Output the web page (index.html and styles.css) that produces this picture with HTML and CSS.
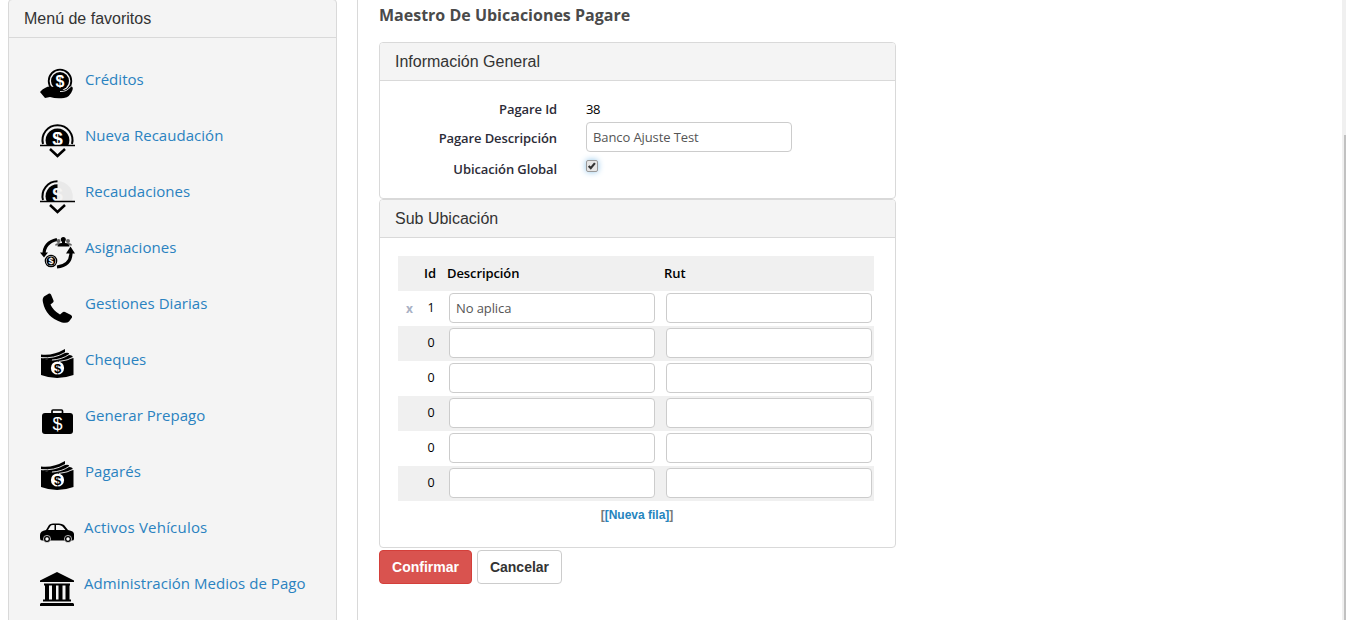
FILE: index.html
```html
<!DOCTYPE html>
<html lang="es">
<head>
<meta charset="utf-8">
<title>Maestro De Ubicaciones Pagare</title>
<link rel="stylesheet" href="styles.css">
</head>
<body>
<div class="page">
  <aside class="sidebar">
    <h2 class="sidebar-title">Menú de favoritos</h2>
    <nav class="menu">
      <a class="item"><svg class="icon" viewBox="0 0 36 36"><circle cx="20" cy="15" r="11.300" fill="none" stroke="#000" stroke-width="1.800"/><circle cx="20" cy="15" r="9"/><text x="20" y="20.500" font-size="16" text-anchor="middle" fill="#fff">$</text><path d="M0 26Q5 20.500 10 20.500Q14 20.500 18 22Q23 21.500 23 24Q30 23 31 20.500Q33.500 20.500 32.500 24Q30 31 24 32Q16 33 10 31L5 32Z"/><path d="M20 25.500Q27 26 30.500 20.500" fill="none" stroke="#f4f4f4" stroke-width=".9"/></svg><span>Créditos</span></a>
      <a class="item"><svg class="icon" viewBox="0 0 36 36"><path d="M3 22A15 15 0 1 1 32 22" fill="none" stroke="#000" stroke-width="2"/><path d="M6.800 23.500A11.900 11.900 0 1 1 28.200 23.500Z"/><text x="17.500" y="22.500" font-size="19" text-anchor="middle" fill="#fff">$</text><path d="M0 23.500H35" stroke="#000" stroke-width="1.500"/><path d="M10 27L17.500 34L25 27" fill="none" stroke="#000" stroke-width="2.500"/></svg><span>Nueva Recaudación</span></a>
      <a class="item"><svg class="icon" viewBox="0 0 36 36"><path d="M17.500 3A15.300 15.300 0 0 1 32 23H17.500Z" fill="#e9e9e9"/><path d="M3 22A15 15 0 0 1 17.500 3.200" fill="none" stroke="#000" stroke-width="2"/><path d="M6.800 23.500A11.900 11.900 0 0 1 17.500 6.300V23.500Z"/><text x="17.500" y="22.500" font-size="19" text-anchor="middle" fill="#f4f4f4">$</text><path d="M0 23.500H35" stroke="#000" stroke-width="1.500"/><path d="M10 27L17.500 34L25 27" fill="none" stroke="#000" stroke-width="2.500"/></svg><span>Recaudaciones</span></a>
      <a class="item"><svg class="icon" viewBox="0 -1.5 36 36"><path d="M4 19Q4 7 17 4M31 17Q31 30 17 31.500" fill="none" stroke="#000" stroke-width="3.200"/><path d="M0 17H8L4 22ZM26 18L30.500 11L35 18Z"/><circle cx="11" cy="25.500" r="5.700" fill="none" stroke="#000" stroke-width="1.200"/><circle cx="11" cy="25.500" r="4.500"/><text x="11" y="28.700" font-size="9" text-anchor="middle" fill="#fff">$</text><g fill="#666"><circle cx="18.500" cy="5.500" r="2"/><circle cx="28" cy="5.500" r="2"/><path d="M15 10Q15 7.500 19 7.500H28Q32 7.500 32 10Z"/></g><circle cx="23.300" cy="4" r="2.500"/><path d="M17.500 11Q18 8 22 7.500V5H25V7.500Q29 8 29.500 11Z"/></svg><span>Asignaciones</span></a>
      <a class="item"><svg class="icon" viewBox="0 -1.5 36 36"><path d="M4 5L9 2Q10 1.500 11 3L13.500 9Q14 10 13 11L10.500 13Q13 19 20 23L23 20.500Q24 20 25 20.500L31 23.500Q32.500 24.500 32 26L29 30Q27 32 22 31Q6 26 3 11Q2 7 4 5Z"/></svg><span>Gestiones Diarias</span></a>
      <a class="item"><svg class="icon" viewBox="0 0 36 36"><path d="M1 12Q17 17 33.500 12V29Q17 35 1 29Z"/><path d="M1 8.500Q13 10 25 3V7Q30 6 29 9Q33 9 33 12Q17 18 1 12Z"/><path d="M1 11.500Q14 13 25 6.500M12 14Q22 13.500 29 8.500M19 15.500Q28 14.500 33.500 11" fill="none" stroke="#f4f4f4" stroke-width=".9"/><circle cx="17.500" cy="22" r="6.600" fill="#fff"/><text x="17.500" y="26.600" font-size="13" text-anchor="middle">$</text></svg><span>Cheques</span></a>
      <a class="item"><svg class="icon" viewBox="0 0 36 36"><path d="M12 12V9Q12 8 13 8H21.500Q22.500 8 22.500 9V12" fill="none" stroke="#000" stroke-width="1.700"/><rect x="2" y="11" width="31" height="21" rx="3"/><text class="thin" x="17.500" y="27.500" font-size="18" text-anchor="middle" fill="#fff">$</text></svg><span>Generar Prepago</span></a>
      <a class="item"><svg class="icon" viewBox="0 0 36 36"><path d="M1 12Q17 17 33.500 12V29Q17 35 1 29Z"/><path d="M1 8.500Q13 10 25 3V7Q30 6 29 9Q33 9 33 12Q17 18 1 12Z"/><path d="M1 11.500Q14 13 25 6.500M12 14Q22 13.500 29 8.500M19 15.500Q28 14.500 33.500 11" fill="none" stroke="#f4f4f4" stroke-width=".9"/><circle cx="17.500" cy="22" r="6.600" fill="#fff"/><text x="17.500" y="26.600" font-size="13" text-anchor="middle">$</text></svg><span>Pagarés</span></a>
      <a class="item wide car"><svg class="icon" viewBox="0 -2 36 36"><path d="M0 19Q0 15 6 14L9 9Q10 7.500 13 7.500H19Q22 7.500 24 9L28 14Q34 15 34 18V23Q34 24.500 32 24.500H2Q0 24.500 0 22Z"/><path d="M8 14L10.500 10Q11 9 13 9H14.500V14ZM16 9H19Q21 9 22.500 10.500L25.500 14H16Z" fill="#f4f4f4"/><g stroke="#f4f4f4" stroke-width=".7"><circle cx="7" cy="23" r="3.600"/><circle cx="28" cy="23" r="3.600"/></g><g fill="#fff"><circle cx="7" cy="23" r="1.700"/><circle cx="28" cy="23" r="1.700"/></g></svg><span>Activos Vehículos</span></a>
      <a class="item wide"><svg class="icon" viewBox="0 -2 36 36"><path d="M17 0L34 8.500V10H0V8.500ZM4 11.500H30V13.500H4ZM5 13H9V28H5ZM12 13H16V28H12ZM18.500 13H22.500V28H18.500ZM25.500 13H29.500V28H25.500ZM3 27.500H31V29.500H3ZM1 31H33L34 32V34H0V32Z"/></svg><span>Administración Medios de Pago</span></a>
    </nav>
  </aside>
  <main class="main">
    <h1 class="title">Maestro De Ubicaciones Pagare</h1>
    <section class="panel general">
      <h2 class="panel-title">Información General</h2>
      <div class="form">
        <span class="label">Pagare Id</span><span class="value">38</span>
        <span class="label">Pagare Descripción</span><input class="field" value="Banco Ajuste Test">
        <span class="label">Ubicación Global</span><span class="check"><svg viewBox="0 0 12 12"><path d="M2 6L4.500 8.500L9.500 2.500" fill="none" stroke="#333" stroke-width="2.600"/></svg></span>
      </div>
    </section>
    <section class="panel sub">
      <h2 class="panel-title">Sub Ubicación</h2>
      <div class="grid">
        <div class="row head"><span></span><span class="id">Id</span><span class="h-desc">Descripción</span><span class="h-rut">Rut</span></div>
        <div class="row"><span class="del">x</span><span class="id">1</span><input class="field" value="No aplica"><input class="field"></div>
        <div class="row alt"><span></span><span class="id">0</span><input class="field"><input class="field"></div>
        <div class="row"><span></span><span class="id">0</span><input class="field"><input class="field"></div>
        <div class="row alt"><span></span><span class="id">0</span><input class="field"><input class="field"></div>
        <div class="row"><span></span><span class="id">0</span><input class="field"><input class="field"></div>
        <div class="row alt"><span></span><span class="id">0</span><input class="field"><input class="field"></div>
      </div>
      <div class="new-row">[<a>[Nueva fila]</a>]</div>
    </section>
    <div class="actions"><button class="btn primary">Confirmar</button><button class="btn">Cancelar</button></div>
  </main>
  <div class="scroll"><div class="thumb"></div></div>
</div>
</body>
</html>
```
FILE: styles.css
```css
* { box-sizing: border-box; }
body { margin: 0; background: #fff; font-family: "Open Sans", sans-serif; font-size: 13px; color: #000; overflow: hidden; }
h1, h2 { margin: 0; }
.page { display: flex; height: 620px; overflow: hidden; }
.sidebar { flex: none; width: 329px; margin-left: 8px; height: 630px; background: #f4f4f4; border: 1px solid #d9d9d9; border-radius: 4px; margin-top: -1px; }
.sidebar-title, .panel-title { font: 16px/37px "Liberation Sans", sans-serif; color: #333; padding-left: 15px; border-bottom: 1px solid #d9d9d9; }
.sidebar-title { height: 38px; }
.menu { padding: 28px 0 0 31px; }
.item { display: flex; height: 56px; gap: 9px; color: #2a82c0; font-size: 15px; line-height: 27px; letter-spacing: .04px; white-space: nowrap; }
.item.wide { gap: 8px; }
.item.car { letter-spacing: .2px; }
.icon { flex: none; width: 36px; height: 36px; font-family: "Liberation Sans", sans-serif; font-weight: 700; letter-spacing: 0; }
.thin { font-weight: 400; }
.main { flex: 1; margin-left: 20px; padding-left: 21px; border-left: 1px solid #d9d9d9; }
.title { height: 42px; font-size: 16px; font-weight: 700; line-height: 30px; color: #4a4a4a; }
.panel { width: 517px; border: 1px solid #d9d9d9; border-radius: 4px; }
.panel-title { height: 38px; background: #f4f4f4; border-radius: 3px 3px 0 0; }
.general { height: 157px; }
.sub { height: 349px; }
.form { display: grid; grid-template-columns: 177px 206px; column-gap: 29px; grid-template-rows: 26px 30px 30px; padding-top: 15px; }
.label { text-align: right; font-weight: 600; color: #2c2c38; line-height: 27px; letter-spacing: -.1px; }
.label:nth-child(3) { line-height: 32px; }
.label:nth-child(5) { line-height: 34px; }
.value { line-height: 26px; letter-spacing: -.4px; }
.field { width: 206px; height: 30px; border: 1px solid #ccc; border-radius: 4px; padding: 0 6px; background: #fff; font: 13px "Open Sans", sans-serif; letter-spacing: -.1px; color: #555; }
.check { width: 12px; height: 12px; margin-top: 8px; border: 1px solid #999; border-radius: 2px; background: #e6e6e6; box-shadow: 0 0 6px #8fc4e9; }
.check svg { display: block; width: 10px; height: 10px; }
.grid { width: 476px; margin: 18px 0 0 18px; }
.row { display: grid; grid-template-columns: 22px 19px 206px 206px; column-gap: 0; align-items: center; height: 35px; padding-bottom: 2px; }
.row .field:nth-child(3) { margin-left: 10px; }
.row .field:nth-child(4) { margin-left: 21px; }
.head, .alt { background: #f0f0f0; }
.head { font-weight: 600; }
.id { text-align: center; }
.row:not(.head) .id { padding-left: 3px; font-size: 12.5px; }
.head .id { text-align: right; padding-right: 3px; }
.h-desc { padding-left: 8px; letter-spacing: -.1px; }
.h-rut { padding-left: 19px; }
.del { color: #a9b1c5; padding: 2px 0 0 8px; font-weight: 700; font-size: 12px; }
.new-row { text-align: center; font: bold 12px/28px "Liberation Sans", sans-serif; color: #777; padding-right: 1px; }
.new-row a { color: #2585be; }
.actions { display: flex; gap: 5px; margin-top: 2px; }
.btn { width: 85px; height: 34px; padding: 0; border: 1px solid #ccc; border-radius: 4px; background: #fff; color: #333; font: bold 14px "Liberation Sans", sans-serif; }
.primary { width: 93px; background: #d9534f; border-color: #d43f3a; color: #fff; }
.scroll { flex: none; width: 4px; background: #f0f0f0; padding: 135px 0 0 2px; }
.thumb { height: 485px; background: #c1c1c1; }
```
